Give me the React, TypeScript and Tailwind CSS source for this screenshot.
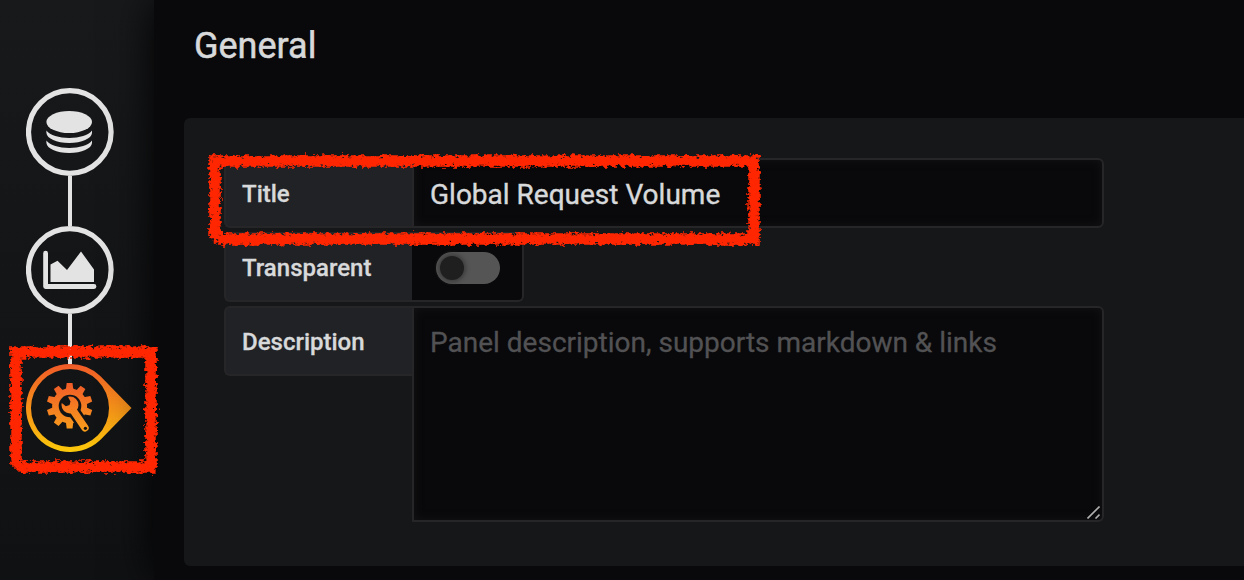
import React from 'react';

const GEAR_TEETH = [0, 36, 72, 108, 180, 216, 252, 288, 324];

function Chalk({ w, h, seed, points, id }: { w: number; h: number; seed: number; points: string; id: string }) {
  return (
    <svg width={w} height={h} viewBox={`0 0 ${w} ${h}`} className="block overflow-visible">
      <defs>
        <filter id={id} filterUnits="userSpaceOnUse" x="-10" y="-10" width={w + 20} height={h + 20} colorInterpolationFilters="sRGB">
          <feTurbulence type="fractalNoise" baseFrequency="0.22 0.3" numOctaves="3" seed={seed} result="n" />
          <feDisplacementMap in="SourceGraphic" in2="n" scale="8" xChannelSelector="R" yChannelSelector="G" result="d" />
          <feTurbulence type="fractalNoise" baseFrequency="0.25 0.35" numOctaves="2" seed={seed + 4} result="m" />
          <feColorMatrix in="m" type="matrix" values="0 0 0 0 0  0 0 0 0 0  0 0 0 0 0  0 9 0 0 -2" result="mask" />
          <feComposite in="d" in2="mask" operator="in" result="edge" />
          <feMorphology in="SourceGraphic" operator="erode" radius="3" result="core" />
          <feDisplacementMap in="core" in2="n" scale="5" xChannelSelector="R" yChannelSelector="G" result="coreRough" />
          <feMerge>
            <feMergeNode in="edge" />
            <feMergeNode in="coreRough" />
          </feMerge>
        </filter>
      </defs>
      <polygon points={points} fill="none" stroke="#ff2600" strokeWidth="11.5" filter={`url(#${id})`} />
    </svg>
  );
}

function DatabaseIcon() {
  return (
    <svg viewBox="0 0 88 88" className="size-[88px]" fill="#e3e3e3">
      <circle cx="43.8" cy="44" r="41.3" fill="none" stroke="#e3e3e3" strokeWidth="5.2" />
      <ellipse cx="43.2" cy="34" rx="22.8" ry="11" />
      <path d="M20.4 42.6C24 47.5 33 50 43.2 50S62.500 47.500 66 42.600V45C65.500 50.500 56 55 43.200 55S21 50.500 20.400 45Z" />
      <path d="M20.4 52.600C24 57.500 33 60 43.200 60S62.500 57.500 66 52.600V55C65.500 60.500 56 65 43.200 65S21 60.500 20.400 55Z" />
    </svg>
  );
}

function ChartIcon() {
  return (
    <svg viewBox="0 0 88 88" className="size-[88px]" fill="#e3e3e3">
      <circle cx="43.8" cy="44" r="41.3" fill="none" stroke="#e3e3e3" strokeWidth="5.2" />
      <path d="M19.600 27.200V60.500H68" fill="none" stroke="#e3e3e3" strokeWidth="4.8" strokeLinecap="round" strokeLinejoin="round" />
      <path d="M24.500 38.500 31.500 34.700 41 44 55 25.500 68 43.500V56H24.500Z" />
    </svg>
  );
}

function SettingsIcon() {
  return (
    <svg viewBox="0 0 108 88" className="h-[88px] w-[108px]">
      <defs>
        <linearGradient id="warm" gradientUnits="userSpaceOnUse" x1="0" y1="0" x2="0" y2="88">
          <stop offset="0" stopColor="#f05a28" />
          <stop offset="1" stopColor="#fbca0a" />
        </linearGradient>
        <linearGradient id="warmIcon" gradientUnits="userSpaceOnUse" x1="0" y1="18" x2="0" y2="70">
          <stop offset="0" stopColor="#f05a28" />
          <stop offset="1" stopColor="#f9a21b" />
        </linearGradient>
        <mask id="gearCut" maskUnits="userSpaceOnUse" x="0" y="0" width="108" height="88">
          <rect width="108" height="88" fill="white" />
          <circle cx="44" cy="42" r="11.300" fill="black" />
          <path d="M46 45 60 65" stroke="black" strokeWidth="12.500" strokeLinecap="round" />
        </mask>
        <mask id="wrenchCut" maskUnits="userSpaceOnUse" x="0" y="0" width="108" height="88">
          <rect width="108" height="88" fill="white" />
          <path d="M33 31 41 31 44.500 37.500 43.500 41 39.800 42.300 34 37.500Z" fill="black" />
          <circle cx="59.400" cy="64.300" r="1.600" fill="black" />
        </mask>
        <mask id="gearShape" maskUnits="userSpaceOnUse" x="0" y="0" width="108" height="88">
          <g fill="white">
            <circle cx="43.600" cy="41.800" r="17.500" />
            {GEAR_TEETH.map((angle) => (
              <path key={angle} d="M40.700 19H46.500L47.500 27H39.700Z" transform={`rotate(${angle} 43.6 41.8)`} />
            ))}
          </g>
        </mask>
      </defs>
      <path fillRule="evenodd" fill="url(#warm)" d="M44 0A44 44 0 0 1 74 11.800L105.500 44 74 76.200A44 44 0 1 1 44 0ZM44 5A39 39 0 1 0 44 83 39 39 0 1 0 44 5Z" />
      <g mask="url(#gearCut)">
        <rect width="88" height="88" fill="url(#warmIcon)" mask="url(#gearShape)" />
      </g>
      <g mask="url(#wrenchCut)">
        <circle cx="44" cy="41" r="8.500" fill="url(#warmIcon)" />
        <path d="M45.500 44 59 63.800" fill="none" stroke="url(#warmIcon)" strokeWidth="7.400" strokeLinecap="round" />
      </g>
    </svg>
  );
}

const label = "flex h-[70px] w-[188px] shrink-0 items-center rounded-l-[6px] border-2 border-r-0 border-[#262628] bg-[#212226] pt-px pl-4 text-[24px] font-medium text-[#d8d9da] [-webkit-text-stroke:0.3px_#d8d9da]";

export default function App() {
  return (
    <div className="relative flex h-[580px] w-[1244px] overflow-hidden bg-[#09090b] font-[Roboto,sans-serif] text-[#d8d9da]">
      <nav className="flex w-[154px] shrink-0 flex-col bg-linear-to-b from-[#18191b] to-[#101113] pt-[88px] pl-[26px]">
        <DatabaseIcon />
        <div className="ml-[42px] h-[50px] w-1 bg-[#e3e3e3]" />
        <ChartIcon />
        <div className="ml-[42px] h-[50px] w-1 bg-[#e3e3e3]" />
        <SettingsIcon />
      </nav>
      <main className="flex min-w-0 flex-1 flex-col bg-[#09090b] pl-[30px] shadow-[0_0_40px_#000]">
        <h3 className="h-[118px] pt-[25px] pl-[10px] text-[36px] leading-[42px] font-normal [-webkit-text-stroke:0.5px_#d8d9da]">General</h3>
        <section className="flex h-[448px] flex-col gap-1 rounded-l-[6px] bg-[#161719] pt-10 pl-10">
          <div className="flex">
            <label className={label}>Title</label>
            <input readOnly value="Global Request Volume" className="h-[70px] w-[692px] rounded-r-[6px] border-2 border-[#262628] bg-[#09090b] px-4 pt-0.5 text-[28px] shadow-[inset_0_0_10px_#141416] outline-none [-webkit-text-stroke:0.4px_#d8d9da]" />
          </div>
          <div className="flex">
            <label className={label}>Transparent</label>
            <div className="flex h-[70px] w-[112px] items-center rounded-r-[6px] border-2 border-l-0 border-[#262628] bg-[#09090b] pt-0.5 pl-6">
              <div className="flex h-8 w-16 items-center rounded-full bg-[#555] pl-1">
                <div className="size-6 rounded-full bg-[#1f1f20] shadow-[0_0_4px_2px_#3c3c3c]" />
              </div>
            </div>
          </div>
          <div className="flex">
            <label className={label}>Description</label>
            <div className="relative">
              <textarea placeholder="Panel description, supports markdown & links" className="block h-[216px] w-[692px] resize-none rounded-r-[6px] border-2 border-[#262628] bg-[#09090b] px-4 pt-[18px] text-[28px] leading-[34px] shadow-[inset_0_0_10px_#141416] outline-none placeholder:text-[#525254] placeholder:[-webkit-text-stroke:0.3px_#525254]" />
              <svg className="absolute right-1 bottom-[3px]" width="13" height="13" viewBox="0 0 13 13" stroke="#b0b0b0" strokeWidth="1.6">
                <path d="M.5 12.5 12.5.5M8.5 12.5 12.5 8.5" />
              </svg>
            </div>
          </div>
        </section>
      </main>
      <div className="absolute top-[345px] left-[9px]">
        <Chalk id="chalkA" w={149} h={128} seed={3} points="7,7 142,7 142,122 13,122 7,116" />
      </div>
      <div className="absolute top-[154px] left-[208px]">
        <Chalk id="chalkB" w={553} h={91} seed={8} points="7,7 546,7 546,85 13,85 7,80" />
      </div>
    </div>
  );
}
